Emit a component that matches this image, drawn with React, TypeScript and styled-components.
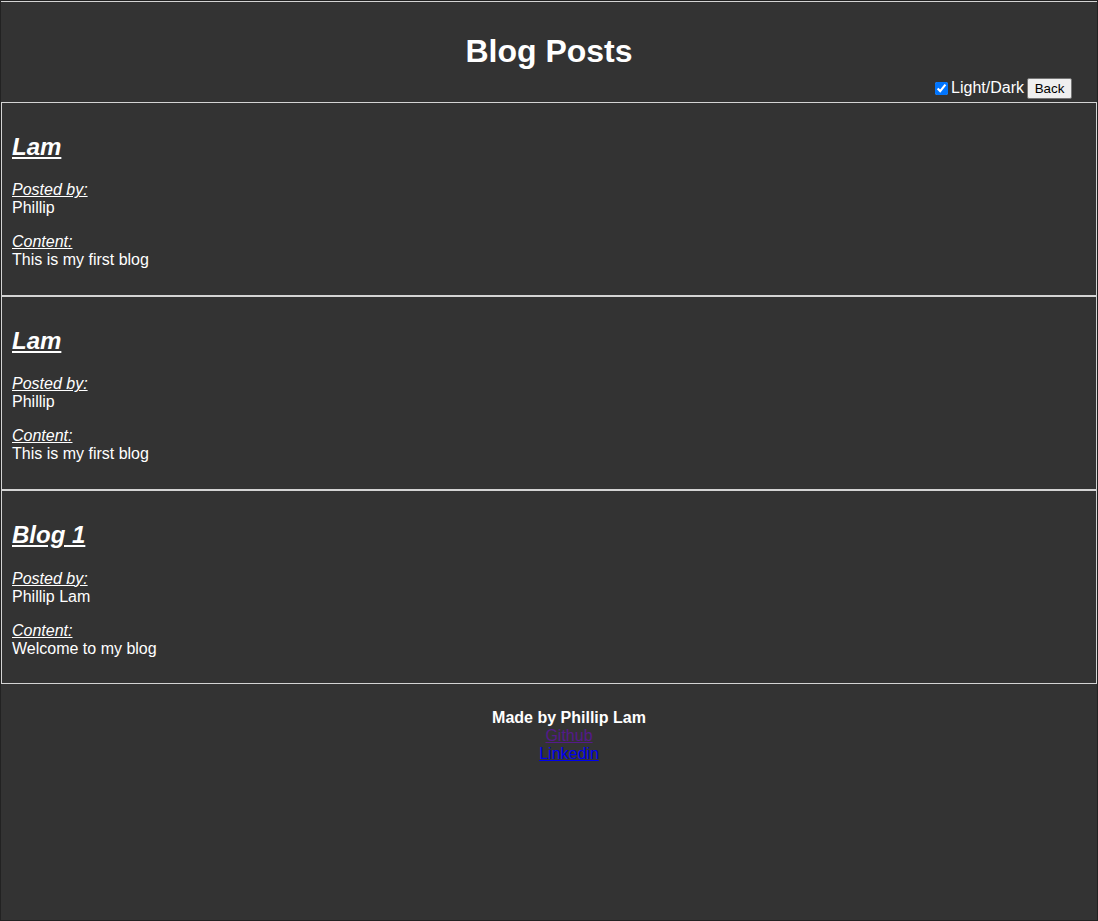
import React, { useState } from 'react';
import styled, { createGlobalStyle } from 'styled-components';

interface Post {
  title: string;
  author: string;
  content: string;
}

const posts: Post[] = [
  { title: 'Lam', author: 'Phillip', content: 'This is my first blog' },
  { title: 'Lam', author: 'Phillip', content: 'This is my first blog' },
  { title: 'Blog 1', author: 'Phillip Lam', content: 'Welcome to my blog' },
];

const GlobalStyle = createGlobalStyle`
  html, body {
    margin: 0;
    padding: 0;
    background: #333333;
  }
  body {
    font-family: "Liberation Sans", Arial, sans-serif;
    color: #ffffff;
  }
`;

const Page = styled.div`
  box-sizing: border-box;
  min-height: 100vh;
  border: 1px solid #222222;
  background: #333333;
`;

const Header = styled.header`
  border-top: 1px solid #d4d4d4;
  display: flex;
  flex-direction: column;
`;

const Title = styled.h1`
  margin: 31px 0 0;
  font-size: 32px;
  font-weight: bold;
  text-align: center;
  line-height: 36.8px;
`;

const Controls = styled.div`
  display: flex;
  justify-content: flex-end;
  align-items: center;
  margin: 8px 25px 3px 0;
  height: 21px;
  font-size: 16px;
`;

const ToggleLabel = styled.label`
  display: flex;
  align-items: center;
  margin-right: 3px;
`;

const Checkbox = styled.input`
  margin: 3px 3px 3px 4px;
  width: 13px;
  height: 13px;
`;

const BackButton = styled.button`
  font-family: "Liberation Sans", Arial, sans-serif;
  font-size: 13.33px;
  padding: 1px 6px;
  width: 45px;
  height: 21px;
  background: #efefef;
  color: #000;
  border: 1px solid #767676;
  border-radius: 2px;
`;

const Card = styled.article`
  border: 1px solid #d4d4d4;
  padding: 10px 10px 9.5px;
  font-size: 16px;
`;

const PostTitle = styled.h2`
  margin: 20px 0 21px;
  font-size: 24px;
  font-style: italic;
  font-weight: bold;
  text-decoration: underline;
  line-height: 27.6px;
`;

const Field = styled.p`
  margin: 16px 0;
  line-height: 18px;
`;

const FieldLabel = styled.span`
  font-style: italic;
  text-decoration: underline;
`;

const Footer = styled.footer`
  margin-top: 25px;
  padding-left: 40px;
  text-align: center;
  font-size: 16px;
  line-height: 18px;
`;

const Credit = styled.div`
  font-weight: bold;
`;

const FooterLink = styled.a<{ visited?: boolean }>`
  display: inline-block;
  color: ${({ visited }) => (visited ? '#551a8b' : '#0000ee')};
  text-decoration: underline;
`;

const PostCard: React.FC<{ post: Post }> = ({ post }) => (
  <Card>
    <PostTitle>{post.title}</PostTitle>
    <Field>
      <FieldLabel>Posted by:</FieldLabel>
      <br />
      {post.author}
    </Field>
    <Field>
      <FieldLabel>Content:</FieldLabel>
      <br />
      {post.content}
    </Field>
  </Card>
);

export default function App() {
  const [dark, setDark] = useState(true);

  return (
    <>
      <GlobalStyle />
      <Page>
        <Header>
          <Title>Blog Posts</Title>
          <Controls>
            <ToggleLabel>
              <Checkbox
                type="checkbox"
                checked={dark}
                onChange={() => setDark(!dark)}
              />
              Light/Dark
            </ToggleLabel>
            <BackButton>Back</BackButton>
          </Controls>
        </Header>
        {posts.map((post, i) => (
          <PostCard key={i} post={post} />
        ))}
        <Footer>
          <Credit>Made by Phillip Lam</Credit>
          <div>
            <FooterLink href="#github" visited>
              Github
            </FooterLink>
          </div>
          <div>
            <FooterLink href="#linkedin">Linkedin</FooterLink>
          </div>
        </Footer>
      </Page>
    </>
  );
}
